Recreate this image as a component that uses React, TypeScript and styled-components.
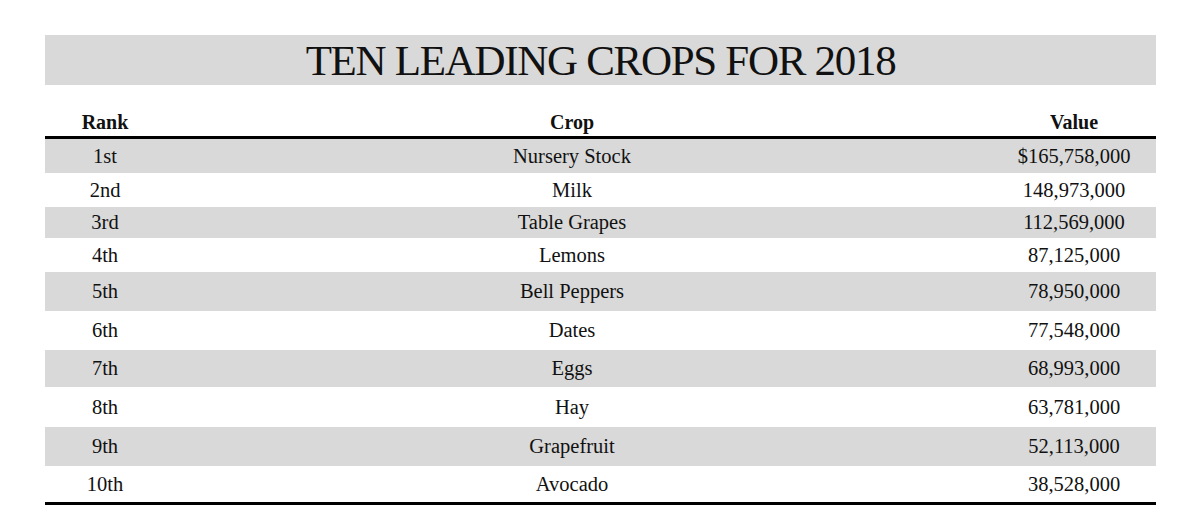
import React from "react";
import styled, { createGlobalStyle } from "styled-components";

const rows = [
  { rank: "1st", crop: "Nursery Stock", value: "$165,758,000", h: 34 },
  { rank: "2nd", crop: "Milk", value: "148,973,000", h: 34 },
  { rank: "3rd", crop: "Table Grapes", value: "112,569,000", h: 31 },
  { rank: "4th", crop: "Lemons", value: "87,125,000", h: 34 },
  { rank: "5th", crop: "Bell Peppers", value: "78,950,000", h: 39 },
  { rank: "6th", crop: "Dates", value: "77,548,000", h: 39 },
  { rank: "7th", crop: "Eggs", value: "68,993,000", h: 37 },
  { rank: "8th", crop: "Hay", value: "63,781,000", h: 40 },
  { rank: "9th", crop: "Grapefruit", value: "52,113,000", h: 39 },
  { rank: "10th", crop: "Avocado", value: "38,528,000", h: 36 },
];

const GlobalStyle = createGlobalStyle`
  html, body {
    margin: 0;
    padding: 0;
    background: #fff;
  }
  body {
    font-family: "Liberation Serif", "Times New Roman", serif;
    color: #111;
  }
`;

const Page = styled.div`
  width: 1200px;
  height: 518px;
  padding: 35px 0 0 45px;
  box-sizing: border-box;
`;

const Sheet = styled.div`
  width: 1111px;
`;

const TitleBar = styled.h1`
  margin: 0;
  height: 50px;
  background: #d9d9d9;
  font-size: 43px;
  font-weight: 400;
  line-height: 52px;
  text-align: center;
  letter-spacing: -1.3px;
`;

const Grid = styled.div`
  display: grid;
  grid-template-columns: 120px 814px 177px;
  align-items: center;
`;

const HeadRow = styled(Grid)`
  align-items: end;
  border-bottom: 3px solid #000;
  box-sizing: border-box;
  height: 54px;
  padding-bottom: 2px;
  font-weight: 700;
  font-size: 20px;
`;

const Body = styled.div`
  border-bottom: 3px solid #000;
`;

const Row = styled(Grid)<{ $shade: boolean; $h: number }>`
  height: ${(p) => p.$h}px;
  background: ${(p) => (p.$shade ? "#d9d9d9" : "#fff")};
  font-size: 20.5px;
`;

const Cell = styled.div<{ $value?: boolean }>`
  text-align: center;
  padding-left: ${(p) => (p.$value ? "13px" : "0")};
  white-space: nowrap;
`;

export default function App() {
  return (
    <Page>
      <GlobalStyle />
      <Sheet>
        <TitleBar>TEN LEADING CROPS FOR 2018</TitleBar>
        <HeadRow>
          <Cell>Rank</Cell>
          <Cell>Crop</Cell>
          <Cell $value>Value</Cell>
        </HeadRow>
        <Body>
          {rows.map((r, i) => (
            <Row key={r.rank} $shade={i % 2 === 0} $h={r.h}>
              <Cell>{r.rank}</Cell>
              <Cell>{r.crop}</Cell>
              <Cell $value>{r.value}</Cell>
            </Row>
          ))}
        </Body>
      </Sheet>
    </Page>
  );
}
